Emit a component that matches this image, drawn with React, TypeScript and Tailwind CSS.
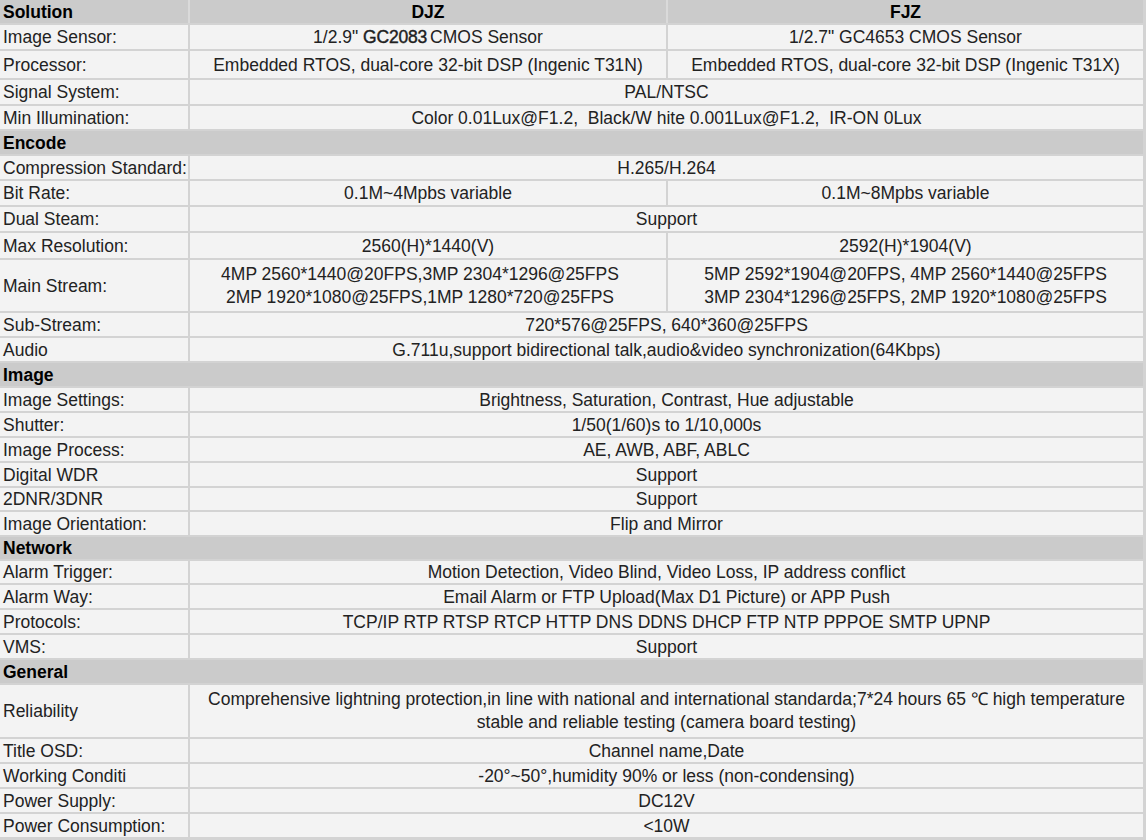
import React from "react";

type Row =
  | { kind: "section"; label: string; h: number; cols?: [string, string] }
  | { kind: "row"; label: string; h: number; a: React.ReactNode; b?: React.ReactNode };

const rows: Row[] = [
  { kind: "section", label: "Solution", h: 23, cols: ["DJZ", "FJZ"] },
  {
    kind: "row",
    label: "Image Sensor:",
    h: 24,
    a: (
      <span>
        1/2.9" <span className="[-webkit-text-stroke:0.4px_#1e1e1e] tracking-[-0.2px]">GC2083</span>
        <span className="inline-block w-[3px]" />CMOS Sensor
      </span>
    ),
    b: '1/2.7" GC4653 CMOS Sensor',
  },
  {
    kind: "row",
    label: "Processor:",
    h: 27,
    a: "Embedded RTOS, dual-core 32-bit DSP (Ingenic T31N)",
    b: "Embedded RTOS, dual-core 32-bit DSP (Ingenic T31X)",
  },
  { kind: "row", label: "Signal System:", h: 24, a: "PAL/NTSC" },
  {
    kind: "row",
    label: "Min Illumination:",
    h: 23,
    a: "Color 0.01Lux@F1.2,\u00a0 Black/W hite 0.001Lux@F1.2,\u00a0 IR-ON 0Lux",
  },
  { kind: "section", label: "Encode", h: 23 },
  { kind: "row", label: "Compression Standard:", h: 23, a: "H.265/H.264" },
  { kind: "row", label: "Bit Rate:", h: 24, a: "0.1M~4Mpbs variable", b: "0.1M~8Mpbs variable" },
  { kind: "row", label: "Dual Steam:", h: 24, a: "Support" },
  { kind: "row", label: "Max Resolution:", h: 25, a: "2560(H)*1440(V)", b: "2592(H)*1904(V)" },
  {
    kind: "row",
    label: "Main Stream:",
    h: 51,
    a: (
      <span className="block pr-[16px] leading-[23px]">
        4MP 2560*1440@20FPS,3MP 2304*1296@25FPS
        <br />
        2MP 1920*1080@25FPS,1MP 1280*720@25FPS
      </span>
    ),
    b: (
      <span className="block leading-[23px]">
        5MP 2592*1904@20FPS, 4MP 2560*1440@25FPS
        <br />
        3MP 2304*1296@25FPS, 2MP 1920*1080@25FPS
      </span>
    ),
  },
  { kind: "row", label: "Sub-Stream:", h: 23, a: "720*576@25FPS, 640*360@25FPS" },
  {
    kind: "row",
    label: "Audio",
    h: 23,
    a: "G.711u,support bidirectional talk,audio&video synchronization(64Kbps)",
  },
  { kind: "section", label: "Image", h: 23 },
  { kind: "row", label: "Image Settings:", h: 23, a: "Brightness, Saturation, Contrast, Hue adjustable" },
  { kind: "row", label: "Shutter:", h: 23, a: "1/50(1/60)s to 1/10,000s" },
  { kind: "row", label: "Image Process:", h: 23, a: "AE, AWB, ABF, ABLC" },
  { kind: "row", label: "Digital WDR", h: 23, a: "Support" },
  { kind: "row", label: "2DNR/3DNR", h: 22, a: "Support" },
  { kind: "row", label: "Image Orientation:", h: 23, a: "Flip and Mirror" },
  { kind: "section", label: "Network", h: 22 },
  {
    kind: "row",
    label: "Alarm Trigger:",
    h: 22,
    a: "Motion Detection, Video Blind, Video Loss, IP address conflict",
  },
  { kind: "row", label: "Alarm Way:", h: 23, a: "Email Alarm or FTP Upload(Max D1 Picture) or APP Push" },
  {
    kind: "row",
    label: "Protocols:",
    h: 23,
    a: "TCP/IP RTP RTSP RTCP HTTP DNS DDNS DHCP FTP NTP PPPOE SMTP UPNP",
  },
  { kind: "row", label: "VMS:", h: 23, a: "Support" },
  { kind: "section", label: "General", h: 23 },
  {
    kind: "row",
    label: "Reliability",
    h: 52,
    a: (
      <span className="block leading-[23px] px-[8px]">
        Comprehensive lightning protection,in line with national and international standarda;7*24 hours 65 ℃ high
        temperature stable and reliable testing (camera board testing)
      </span>
    ),
  },
  { kind: "row", label: "Title OSD:", h: 23, a: "Channel name,Date" },
  { kind: "row", label: "Working Conditi", h: 23, a: "-20°~50°,humidity 90% or less (non-condensing)" },
  { kind: "row", label: "Power Supply:", h: 23, a: "DC12V" },
  { kind: "row", label: "Power Consumption:", h: 23, a: "<10W" },
];

const cell = "bg-[#f3f3f3] flex items-center justify-center text-center overflow-hidden";

export default function App() {
  return (
    <div
      className="w-[1146px] h-[840px] overflow-hidden bg-[#d3d3d3] flex flex-col gap-[2px] text-[#222222] text-[17.5px] leading-[20px]"
      style={{ fontFamily: '"Liberation Sans", Arial, sans-serif' }}
    >
      {rows.map((r, i) => {
        if (r.kind === "section") {
          if (r.cols) {
            return (
              <div
                key={i}
                className="grid grid-cols-[188px_476px_475px] grid-rows-[100%] gap-x-[2px] bg-[#dadada] w-[1143px] shrink-0 overflow-hidden"
                style={{ height: r.h }}
              >
                <div className="bg-[#cbcbcb] pl-[3px] flex items-center font-bold text-black">
                  <span>{r.label}</span>
                </div>
                <div className="bg-[#cbcbcb] flex items-center justify-center font-bold text-black">
                  <span>{r.cols[0]}</span>
                </div>
                <div className="bg-[#cbcbcb] flex items-center justify-center font-bold text-black">
                  <span>{r.cols[1]}</span>
                </div>
              </div>
            );
          }
          return (
            <div
              key={i}
              className="bg-[#cbcbcb] w-[1143px] pl-[3px] flex items-center font-bold text-black shrink-0 overflow-hidden"
              style={{ height: r.h }}
            >
              <span>{r.label}</span>
            </div>
          );
        }
        return (
          <div
            key={i}
            className="grid grid-cols-[188px_476px_475px] grid-rows-[100%] gap-x-[2px] shrink-0 overflow-hidden"
            style={{ height: r.h }}
          >
            <div className="bg-[#f3f3f3] pl-[3px] flex items-center whitespace-nowrap overflow-hidden">
              <span>{r.label}</span>
            </div>
            {r.b !== undefined ? (
              <>
                <div className={cell + " whitespace-nowrap"}>
                  <span>{r.a}</span>
                </div>
                <div className={cell + " whitespace-nowrap"}>
                  <span>{r.b}</span>
                </div>
              </>
            ) : (
              <div className={"col-span-2 " + cell}>
                <span>{r.a}</span>
              </div>
            )}
          </div>
        );
      })}
    </div>
  );
}
